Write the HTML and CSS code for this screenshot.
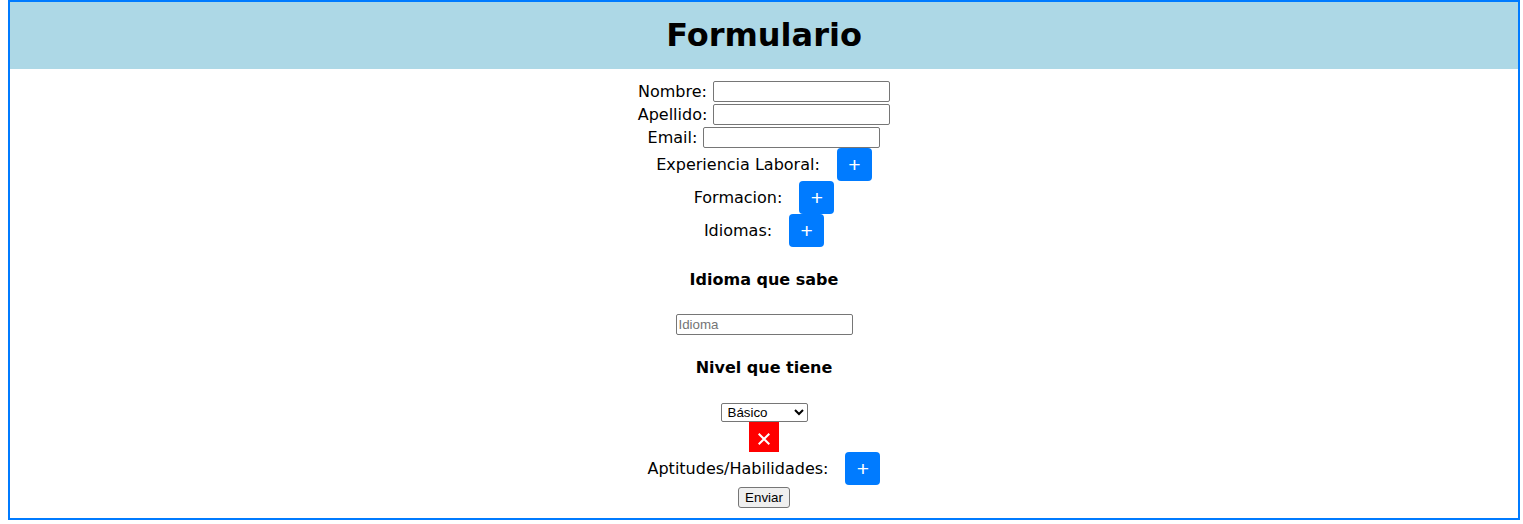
FILE: index.html
```html
<!DOCTYPE html>
<html lang="es">
<head>
<meta charset="utf-8">
<title>Formulario</title>
<link rel="stylesheet" href="styles.css">
</head>
<body>
<div class="page">
  <h1 class="title">Formulario</h1>
  <form class="form">
    <div class="field-row">
      <label class="label">Nombre:</label>
      <input class="text-input" type="text">
    </div>
    <div class="field-row">
      <label class="label">Apellido:</label>
      <input class="text-input" type="text">
    </div>
    <div class="field-row">
      <label class="label">Email:</label>
      <input class="text-input" type="text">
    </div>
    <div class="add-group">
      <div class="add-row">
        <span class="label">Experiencia Laboral:</span>
        <button type="button" class="add-btn">+</button>
      </div>
      <div class="add-row">
        <span class="label">Formacion:</span>
        <button type="button" class="add-btn">+</button>
      </div>
      <div class="add-row">
        <span class="label">Idiomas:</span>
        <button type="button" class="add-btn">+</button>
      </div>
    </div>
    <div class="idioma-block">
      <h4 class="sub-heading first">Idioma que sabe</h4>
      <input class="text-input idioma-input" type="text" placeholder="Idioma">
      <h4 class="sub-heading second">Nivel que tiene</h4>
      <select class="level-select">
        <option>Básico</option>
        <option>Intermedio</option>
        <option>Avanzado</option>
      </select>
      <button type="button" class="remove-btn" aria-label="Eliminar">
        <svg width="12" height="12" viewBox="0 0 12 12"><path d="M0.7 0.7L11.3 11.3M11.3 0.7L0.7 11.3" stroke="#fff" stroke-width="2" fill="none"/></svg>
      </button>
    </div>
    <div class="add-row">
      <span class="label">Aptitudes/Habilidades:</span>
      <button type="button" class="add-btn">+</button>
    </div>
    <div class="submit-row">
      <button type="submit" class="submit-btn">Enviar</button>
    </div>
  </form>
</div>
</body>
</html>
```
FILE: styles.css
```css
html, body {
  background: #fff;
}
body {
  margin: 0 3px 0 8px;
  font-family: "DejaVu Sans", Verdana, sans-serif;
  font-size: 16px;
  color: #000;
}
.page {
  border: 2px solid #007bff;
}
.title {
  margin: 0;
  height: 67px;
  line-height: 67px;
  font-size: 32px;
  font-weight: bold;
  text-align: center;
  background: #add8e6;
}
.form {
  padding: 11px 0 10px;
}
.field-row {
  display: flex;
  justify-content: center;
  align-items: center;
  gap: 6px;
  height: 23px;
}
.label {
  line-height: 19px;
}
.text-input {
  box-sizing: border-box;
  width: 177px;
  height: 21px;
  margin: 0;
  padding: 1px 2px;
  border: 1px solid #767676;
  border-radius: 2px;
  font-family: "Liberation Sans", Arial, sans-serif;
  font-size: 13.33px;
  background: #fff;
}
.text-input::placeholder {
  color: #757575;
}
.add-group {
  margin-top: -1px;
}
.add-row {
  display: flex;
  justify-content: center;
  align-items: center;
  gap: 17px;
  height: 33px;
}
.add-btn {
  width: 35px;
  height: 33px;
  margin: 0;
  padding: 0;
  border: none;
  border-radius: 4px;
  background: #007bff;
  color: #fff;
  font-family: "Liberation Sans", Arial, sans-serif;
  font-size: 21px;
  line-height: 33px;
}
.idioma-block {
  display: flex;
  flex-direction: column;
  align-items: center;
}
.sub-heading {
  margin: 0;
  font-size: 16px;
  font-weight: bold;
  line-height: 19px;
}
.sub-heading.first {
  margin-top: 23px;
  margin-bottom: 25px;
}
.sub-heading.second {
  margin-top: 23px;
  margin-bottom: 26px;
}
.level-select {
  box-sizing: border-box;
  width: 87px;
  height: 19px;
  margin: 0;
  padding: 0 0 0 2px;
  border: 1px solid #767676;
  border-radius: 2px;
  font-family: "Liberation Sans", Arial, sans-serif;
  font-size: 13.33px;
  background: #fff;
  color: #000;
}
.remove-btn {
  display: flex;
  align-items: center;
  justify-content: center;
  width: 30px;
  height: 30px;
  margin: 0;
  padding: 3px 0 0;
  border: none;
  background: #ff0000;
}
.submit-row {
  display: flex;
  justify-content: center;
  margin-top: 2px;
}
.submit-btn {
  box-sizing: border-box;
  height: 21px;
  margin: 0;
  padding: 0 6px;
  border: 1px solid #767676;
  border-radius: 3px;
  background: #efefef;
  font-family: "Liberation Sans", Arial, sans-serif;
  font-size: 13.33px;
  color: #000;
}
```
